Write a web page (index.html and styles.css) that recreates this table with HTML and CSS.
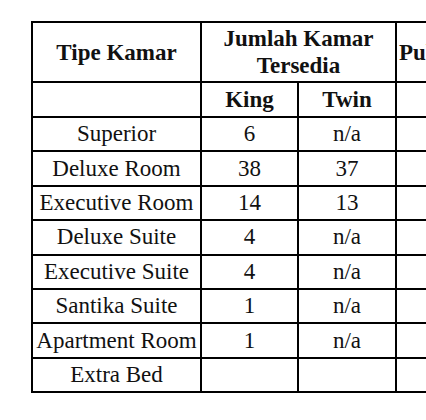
FILE: index.html
```html
<!DOCTYPE html>
<html>
<head>
<meta charset="utf-8">
<link rel="stylesheet" href="styles.css">
</head>
<body>
<div class="frame">
<table class="rooms">
  <colgroup>
    <col class="c-type">
    <col class="c-king">
    <col class="c-twin">
    <col class="c-pub">
  </colgroup>
  <tr class="head1">
    <th>Tipe Kamar</th>
    <th colspan="2">Jumlah Kamar<br>Tersedia</th>
    <th class="pub">Publish Rate</th>
  </tr>
  <tr class="head2">
    <th></th>
    <th>King</th>
    <th>Twin</th>
    <th></th>
  </tr>
  <tr><td>Superior</td><td>6</td><td>n/a</td><td></td></tr>
  <tr><td>Deluxe Room</td><td>38</td><td>37</td><td></td></tr>
  <tr><td>Executive Room</td><td>14</td><td>13</td><td></td></tr>
  <tr><td>Deluxe Suite</td><td>4</td><td>n/a</td><td></td></tr>
  <tr><td>Executive Suite</td><td>4</td><td>n/a</td><td></td></tr>
  <tr><td>Santika Suite</td><td>1</td><td>n/a</td><td></td></tr>
  <tr><td>Apartment Room</td><td>1</td><td>n/a</td><td></td></tr>
  <tr><td>Extra Bed</td><td></td><td></td><td></td></tr>
</table>
</div>
</body>
</html>
```

FILE: styles.css
```css
html, body {
  margin: 0;
  padding: 0;
  background: #fff;
  overflow: hidden;
  width: 426px;
  height: 420px;
}
.frame {
  padding: 21px 0 0 31px;
  width: 600px;
}
.rooms {
  border-collapse: collapse;
  table-layout: fixed;
  width: 560px;
  font-family: "Liberation Serif", "Times New Roman", serif;
  font-size: 23px;
  color: #111;
}
.c-type { width: 169px; }
.c-king { width: 97px; }
.c-twin { width: 98px; }
.c-pub { width: 196px; }
.rooms th, .rooms td {
  border: 2px solid #000;
  text-align: center;
  vertical-align: middle;
  padding: 0;
  height: 32.4px;
  line-height: 24px;
  white-space: nowrap;
}
.rooms th { font-weight: bold; }
.head1 th {
  height: 58px;
  line-height: 27px;
}
.head2 th {
  height: 33px;
}
.head1 th.pub {
  text-align: left;
  padding-left: 2px;
}
```
